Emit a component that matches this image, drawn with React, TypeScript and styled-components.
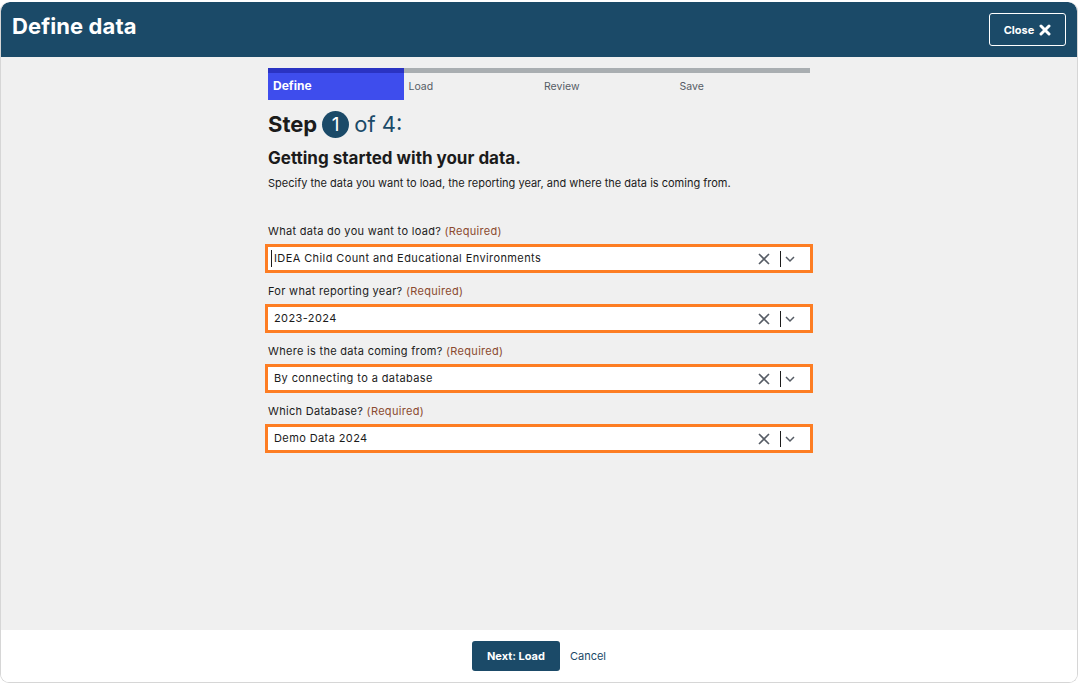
import styled, { createGlobalStyle } from "styled-components";

const GlobalStyle = createGlobalStyle`
  html, body {
    margin: 0;
    padding: 0;
    background: #ffffff;
  }
  body {
    font-family: Inter, "Liberation Sans", sans-serif;
    color: #1b1b1b;
  }
  * { box-sizing: border-box; }
`;

const Modal = styled.div`
  display: flex;
  flex-direction: column;
  border: 1px solid #d6d6d6;
  border-top: none;
  border-radius: 9px;
  overflow: hidden;
  margin-top: 2px;
  height: calc(100vh - 2px);
`;

const Header = styled.header`
  height: 55px;
  flex-shrink: 0;
  background: #1b4a68;
  border-radius: 9px 9px 0 0;
  display: flex;
  align-items: flex-start;
  justify-content: space-between;
  padding: 0 11px 0 11px;
`;

const Title = styled.h1`
  margin: 10px 0 0 0;
  color: #ffffff;
  font-size: 22px;
  line-height: 28px;
  font-weight: 700;
  letter-spacing: 0.1px;
`;

const CloseButton = styled.button`
  margin-top: 11px;
  width: 77px;
  height: 33px;
  border: 1px solid #ffffff;
  border-radius: 3px;
  background: transparent;
  color: #ffffff;
  font-family: inherit;
  font-size: 11px;
  font-weight: 700;
  display: flex;
  align-items: center;
  justify-content: center;
  gap: 5px;
  cursor: pointer;
`;

const Body = styled.main`
  flex: 1;
  background: #f0f0f0;
  padding-top: 11px;
`;

const Column = styled.div`
  width: 548px;
  margin: 0 auto;
`;

const Tracker = styled.ol`
  list-style: none;
  margin: 0 3px;
  padding: 0;
  display: grid;
  grid-template-columns: repeat(4, 1fr);
`;

const TrackerStep = styled.li<{ $active?: boolean }>`
  border-top: 5px solid ${({ $active }) => ($active ? "#2a33c2" : "#a9aeb1")};
  background: ${({ $active }) => ($active ? "#3e4ded" : "transparent")};
  color: ${({ $active }) => ($active ? "#ffffff" : "#565c65")};
  font-size: ${({ $active }) => ($active ? "12px" : "10.5px")};
  font-weight: ${({ $active }) => ($active ? 700 : 400)};
  height: 32px;
  line-height: 16px;
  padding: ${({ $active }) => ($active ? "5px 5px" : "6px 5px")};
`;

const StepHeading = styled.h2`
  margin: 10px 3px 0;
  display: flex;
  align-items: center;
  font-size: 22px;
  font-weight: 700;
  color: #1b1b1b;
  height: 28px;
`;

const StepNumber = styled.span`
  width: 27px;
  height: 27px;
  border-radius: 50%;
  background: #1b4a68;
  color: #ffffff;
  font-size: 19px;
  font-weight: 400;
  display: inline-flex;
  align-items: center;
  justify-content: center;
  margin: 0 5px 0 5px;
`;

const StepTotal = styled.span`
  font-weight: 400;
  color: #1b4a68;
`;

const Subheading = styled.h3`
  margin: 10px 3px 0;
  font-size: 17px;
  line-height: 20px;
  font-weight: 700;
`;

const Intro = styled.p`
  margin: 8px 3px 0;
  font-size: 11px;
  line-height: 14px;
  color: #1b1b1b;
`;

const Form = styled.div`
  margin-top: 34px;
  display: flex;
  flex-direction: column;
  gap: 11px;
`;

const Field = styled.div`
  display: flex;
  flex-direction: column;
  gap: 6px;
`;

const Label = styled.label`
  margin: 0 3px;
  font-size: 11px;
  letter-spacing: 0.3px;
  line-height: 14px;
  color: #1b1b1b;
`;

const Required = styled.span`
  color: #8b4a2f;
`;

const SelectBox = styled.div`
  height: 29px;
  border: 3px solid #fd7d23;
  background: #ffffff;
  display: flex;
  align-items: center;
  padding: 0 11px 0 3px;
`;

const Value = styled.span<{ $focused?: boolean }>`
  flex: 1;
  font-size: 11px;
  letter-spacing: 0.4px;
  color: #1b1b1b;
  padding-left: 2px;
  border-left: 1px solid ${({ $focused }) => ($focused ? "#1b1b1b" : "transparent")};
  line-height: 17px;
`;

const Controls = styled.div`
  display: flex;
  align-items: center;
`;

const IconBtn = styled.span<{ $w: number }>`
  display: inline-flex;
  width: ${({ $w }) => $w}px;
  justify-content: center;
  color: #565c65;
`;

const Divider = styled.span`
  width: 1px;
  height: 16px;
  background: #1b1b1b;
  margin-left: 5px;
`;

const Footer = styled.footer`
  height: 52px;
  flex-shrink: 0;
  background: #ffffff;
  display: flex;
  align-items: center;
  justify-content: center;
  gap: 10px;
  padding-bottom: 1px;
`;

const PrimaryButton = styled.button`
  width: 88px;
  height: 30px;
  border: none;
  border-radius: 3px;
  background: #1b4a68;
  color: #ffffff;
  font-family: inherit;
  font-size: 11px;
  font-weight: 700;
`;

const LinkButton = styled.a`
  font-size: 11px;
  color: #1b4a68;
  text-decoration: none;
`;

const ClearIcon = () => (
  <svg width="14" height="14" viewBox="0 0 14 14" fill="none" stroke="currentColor" strokeWidth="1.6">
    <path d="M2 2 L12 12 M12 2 L2 12" />
  </svg>
);

const Chevron = () => (
  <svg width="12" height="8" viewBox="0 0 12 8" fill="none" stroke="currentColor" strokeWidth="1.5">
    <path d="M2 2 L6 6 L10 2" />
  </svg>
);

const fields = [
  { label: "What data do you want to load?", value: "IDEA Child Count and Educational Environments", focused: true },
  { label: "For what reporting year?", value: "2023-2024" },
  { label: "Where is the data coming from?", value: "By connecting to a database" },
  { label: "Which Database?", value: "Demo Data 2024" },
];

const App = () => {
  return (
    <>
      <GlobalStyle />
      <Modal>
        <Header>
          <Title>Define data</Title>
          <CloseButton>
            Close
            <svg width="12" height="12" viewBox="0 0 12 12" stroke="#ffffff" strokeWidth="3" strokeLinecap="round">
              <path d="M2 2 L10 10 M10 2 L2 10" />
            </svg>
          </CloseButton>
        </Header>
        <Body>
          <Column>
            <Tracker>
              <TrackerStep $active>Define</TrackerStep>
              <TrackerStep>Load</TrackerStep>
              <TrackerStep>Review</TrackerStep>
              <TrackerStep>Save</TrackerStep>
            </Tracker>
            <StepHeading>
              Step<StepNumber>1</StepNumber>
              <StepTotal>of 4:</StepTotal>
            </StepHeading>
            <Subheading>Getting started with your data.</Subheading>
            <Intro>
              Specify the data you want to load, the reporting year, and where the data is coming from.
            </Intro>
            <Form>
              {fields.map((f) => (
                <Field key={f.label}>
                  <Label>
                    {f.label} <Required>(Required)</Required>
                  </Label>
                  <SelectBox>
                    <Value $focused={f.focused}>{f.value}</Value>
                    <Controls>
                      <IconBtn $w={22}>
                        <ClearIcon />
                      </IconBtn>
                      <Divider />
                      <IconBtn $w={18}>
                        <Chevron />
                      </IconBtn>
                    </Controls>
                  </SelectBox>
                </Field>
              ))}
            </Form>
          </Column>
        </Body>
        <Footer>
          <PrimaryButton>Next: Load</PrimaryButton>
          <LinkButton href="#">Cancel</LinkButton>
        </Footer>
      </Modal>
    </>
  );
};

export default App;
